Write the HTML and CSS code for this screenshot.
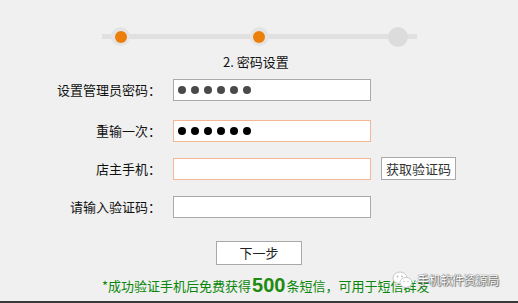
FILE: index.html
```html
<!DOCTYPE html>
<html lang="zh-CN">
<head>
<meta charset="utf-8">
<title>密码设置</title>
<link rel="stylesheet" href="styles.css">
</head>
<body>
<div class="page">
  <div class="steps">
    <span class="step done"><i></i></span>
    <span class="step done"><i></i></span>
    <span class="step todo"></span>
  </div>
  <div class="step-label">2. 密码设置</div>

  <div class="row r1">
    <label class="lbl">设置管理员密码：</label>
    <div class="field">
      <span class="dot grey"></span><span class="dot grey"></span><span class="dot grey"></span><span class="dot grey"></span><span class="dot grey"></span><span class="dot grey"></span>
    </div>
  </div>
  <div class="row r2">
    <label class="lbl">重输一次：</label>
    <div class="field hl">
      <span class="dot"></span><span class="dot"></span><span class="dot"></span><span class="dot"></span><span class="dot"></span><span class="dot"></span>
    </div>
  </div>
  <div class="row r3">
    <label class="lbl">店主手机：</label>
    <div class="field hl"></div>
    <button class="btn code">获取验证码</button>
  </div>
  <div class="row r4">
    <label class="lbl">请输入验证码：</label>
    <div class="field"></div>
  </div>

  <div class="actions">
    <button class="btn next">下一步</button>
  </div>

  <div class="note">*成功验证手机后免费获得<b>500</b>条短信，可用于短信群发</div>

  <div class="watermark">
    <svg class="wx" width="22" height="20" viewBox="0 0 22 20">
      <ellipse cx="8" cy="8" rx="7" ry="6" fill="#fff" stroke="#bbb" stroke-width="0.8"/>
      <path d="M4 12.5 L3 15.5 L7 13.5 Z" fill="#fff" stroke="#bbb" stroke-width="0.6"/>
      <ellipse cx="14" cy="12.5" rx="6" ry="5" fill="#fff" stroke="#bbb" stroke-width="0.8"/>
      <path d="M17.5 16 L19 18.5 L15.5 17 Z" fill="#fff" stroke="#bbb" stroke-width="0.6"/>
      <circle cx="5.5" cy="6.5" r="0.9" fill="#bbb"/>
      <circle cx="10" cy="6.5" r="0.9" fill="#bbb"/>
      <circle cx="12" cy="11.5" r="0.7" fill="#bbb"/>
      <circle cx="16" cy="11.5" r="0.7" fill="#bbb"/>
    </svg>
    <span class="wm-text">手机软件资源局</span>
  </div>
</div>
</body>
</html>
```
FILE: styles.css
```css
* { box-sizing: border-box; }
html, body { margin: 0; padding: 0; background: #f0f0f0; }
body {
  font-family: "Noto Sans CJK SC", "Liberation Sans", sans-serif;
  font-size: 13px;
  color: #111;
}
.page {
  position: relative;
  width: 518px;
  height: 303px;
  border-bottom: 2px solid #3a3a3a;
  padding-top: 27px;
  overflow: hidden;
}
.steps {
  margin-left: 102px;
  width: 315px;
  height: 19px;
  padding: 0 9px;
  display: flex;
  justify-content: space-between;
  align-items: center;
  background: linear-gradient(#e0e0e0, #e0e0e0) 0 7px / 100% 5px no-repeat;
}
.step {
  width: 19px;
  height: 19px;
  border-radius: 50%;
  display: flex;
  align-items: center;
  justify-content: center;
}
.step.done { background: #e4e4e4; }
.step.done i {
  width: 12px;
  height: 12px;
  border-radius: 50%;
  background: #eb7f0a;
}
.step.todo { width: 20px; height: 20px; background: #dcdcdc; }
.step-label {
  margin-top: 8px;
  padding-left: 223px;
  line-height: 16px;
  height: 16px;
}
.row {
  display: flex;
  align-items: center;
  height: 22px;
}
.r1 { margin-top: 9px; }
.r2 { margin-top: 19px; }
.r3 { margin-top: 15px; height: 23px; }
.r4 { margin-top: 16px; }
.lbl {
  width: 162px;
  text-align: right;
  line-height: 16px;
  padding-right: 1px;
}
.field {
  margin-left: 11px;
  width: 198px;
  height: 22px;
  background: #fff;
  border: 1px solid #aaaaaa;
  display: flex;
  align-items: center;
  padding-left: 4px;
  gap: 5px;
}
.field.hl { border-color: #f3b798; }
.dot {
  width: 8px;
  height: 8px;
  border-radius: 50%;
  background: #000;
}
.dot.grey { background: #4a4a4a; }
.btn {
  font-family: "Noto Sans CJK SC", "Liberation Sans", sans-serif;
  font-size: 13px;
  color: #333;
  background: #fff;
  border: 1px solid #a9a9a9;
  border-radius: 0;
  padding: 0;
  line-height: 16px;
}
.btn.code {
  margin-left: 10px;
  width: 75px;
  height: 23px;
}
.actions {
  margin-top: 23px;
  padding-left: 216px;
  display: flex;
}
.btn.next {
  width: 86px;
  height: 24px;
  color: #222;
}
.note {
  margin-top: 10px;
  padding-left: 102px;
  color: #0a870a;
  line-height: 20px;
  height: 20px;
  white-space: nowrap;
}
.note b {
  font-family: "Liberation Sans", Arial, sans-serif;
  font-size: 20px;
  font-weight: bold;
  color: #1f8a10;
  margin: 0 1px;
  vertical-align: -1px;
}
.watermark {
  position: absolute;
  left: 392px;
  top: 270px;
  display: flex;
  align-items: center;
  gap: 3px;
}
.wm-text {
  color: #fff;
  font-size: 12px;
  line-height: 18px;
  letter-spacing: -0.3px;
  text-shadow: 0 0 1px #555, 0 0 1px #555, 1px 1px 1px #777;
}
```
